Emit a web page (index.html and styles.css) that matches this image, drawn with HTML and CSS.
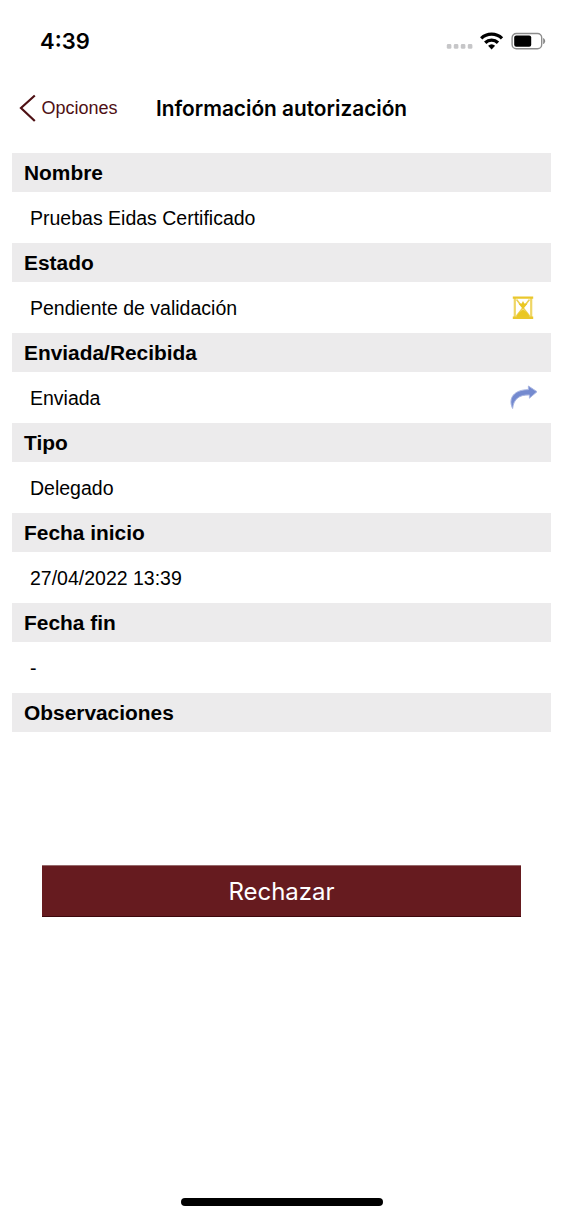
FILE: index.html
```html
<!DOCTYPE html>
<html lang="es">
<head>
<meta charset="utf-8">
<title>Información autorización</title>
<link rel="stylesheet" href="styles.css">
</head>
<body>
<div class="screen">
  <header class="status">
    <span class="time">4:39</span>
    <svg class="status-icons" width="102" height="24" viewBox="0 0 102 24">
      <g fill="#c6c6c8"><rect x="2.8" y="13" width="4.6" height="4.8" rx="1.4"/><rect x="9.8" y="13" width="4.6" height="4.8" rx="1.4"/><rect x="16.8" y="13" width="4.6" height="4.8" rx="1.4"/><rect x="23.8" y="13" width="4.6" height="4.8" rx="1.4"/></g>
      <g fill="none" stroke="#000" stroke-width="3.3"><path d="M37.2 7.4a15 15 0 0 1 20.8 0"/><path d="M41.2 11.8a9.2 9.2 0 0 1 12.8 0"/></g>
      <path d="M44.1 14.8a5.2 5.2 0 0 1 7 0L47.6 18.4z"/>
      <rect x="68.1" y="2.5" width="29.6" height="15.2" rx="4.2" fill="none" stroke="#8c8c8c" stroke-width="1.4"/>
      <rect x="70.2" y="4.6" width="17" height="11.2" rx="2"/>
      <path d="M99.6 7.4q2.6 2.7 0 5.4z" fill="#777" stroke="#777" stroke-width=".6"/>
    </svg>
  </header>
  <nav class="nav">
    <a class="back"><svg width="17" height="28" viewBox="0 0 17 28"><path d="M15.8 1.5L2 14l13.8 13" fill="none" stroke="#4e1014" stroke-width="2.2"/></svg><span class="back-label">Opciones</span></a>
    <h1 class="title">Información autorización</h1>
  </nav>
  <main class="details">
    <h2 class="label">Nombre</h2>
    <div class="value">Pruebas Eidas Certificado</div>
    <h2 class="label">Estado</h2>
    <div class="value">Pendiente de validación
      <svg class="icon" width="28" height="28" viewBox="0 0 28 28">
        <path d="M5.8 4v19M22.2 4v19" stroke="#efd665" stroke-width="2.2"/>
        <path d="M7.5 5.5L20.5 22M20.5 5.5L7.5 22" stroke="#ecd054" stroke-width="1.6"/>
        <path d="M14 7l1.3 2.5 3.2.3-2.2 2.4L14 15l-2.3-2.8-2.2-2.4 3.2-.3zM7 23l3-4.2 4-3.2 4 3.2 3 4.2z" fill="#eac723"/>
        <path d="M3.8 3.6h20.4M3.8 23.7h20.4" stroke="#eac72c" stroke-width="2.4"/>
      </svg>
    </div>
    <h2 class="label">Enviada/Recibida</h2>
    <div class="value">Enviada
      <svg class="icon" width="28" height="28" viewBox="0 0 28 28">
        <path d="M3.6 24.5C-1.4 14 5.4 5.5 19.4 5.7V2L28 7.7l-7.6 6.5v-3.3C10.2 10.7 4.7 14.8 3.6 24.5z" fill="#748acf" stroke="#a8b5e2" stroke-width="1"/>
      </svg>
    </div>
    <h2 class="label">Tipo</h2>
    <div class="value">Delegado</div>
    <h2 class="label">Fecha inicio</h2>
    <div class="value">27/04/2022 13:39</div>
    <h2 class="label">Fecha fin</h2>
    <div class="value">-</div>
    <h2 class="label">Observaciones</h2>
  </main>
  <button class="reject">Rechazar</button>
  <div class="home"></div>
</div>
</body>
</html>
```
FILE: styles.css
```css
* { box-sizing: border-box; }
body { margin: 0; background: #fff; color: #000; font-family: "Liberation Sans", Arial, sans-serif; }
.screen { height: 1218px; display: flex; flex-direction: column; overflow: hidden; }
.status { height: 82px; padding: 0 17px 0 40px; display: flex; justify-content: space-between; align-items: center; flex: none; }
.time { font: 600 22px/24px Inter, sans-serif; }
.status-icons { display: block; margin-top: 4px; }
.nav { height: 52px; display: flex; align-items: center; padding-left: 19px; flex: none; }
.back { display: flex; align-items: center; width: 137px; color: #4e1014; gap: 5.5px; }
.back-label { font-size: 18px; line-height: 24px; }
.title { margin: 2px 0 0; font: 600 20.8px/26px Inter, sans-serif; white-space: nowrap; }
.details { margin: 19px 12px 0; flex: none; }
.label { margin: 0; height: 39px; padding-left: 12px; background: #ecebec; font-size: 20.9px; line-height: 39px; font-weight: 700; }
.value { height: 51px; padding: 2px 14px 0 18px; display: flex; justify-content: space-between; align-items: center; font-size: 19.5px; white-space: nowrap; }
.icon { flex: none; margin-top: -2px; }
.reject { flex: none; margin: 133px 42px 0; height: 52px; padding: 1px 0 0; border: 0; border-top: 1px solid #96696b; border-bottom: 1px solid #3d080c; border-radius: 0; background: #661b1f; color: #fff; font: 400 24px/49px Inter, sans-serif; }
.home { width: 202px; height: 8px; margin: auto auto 12px; border-radius: 4px; background: #000; flex: none; }
```
